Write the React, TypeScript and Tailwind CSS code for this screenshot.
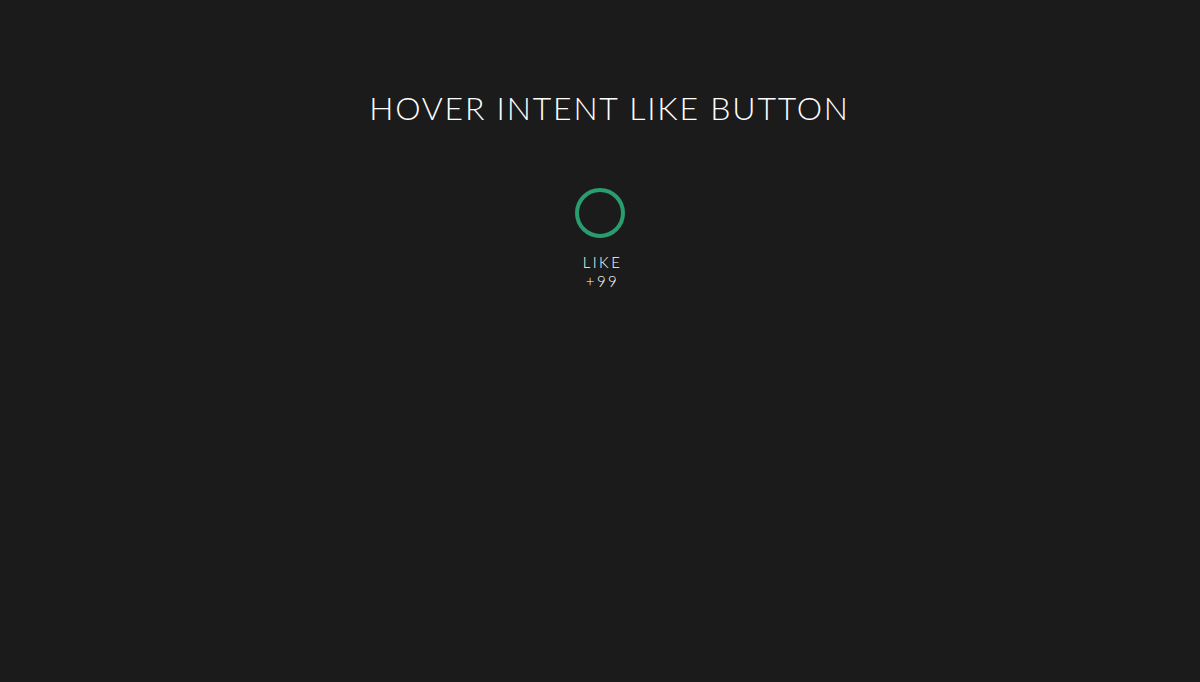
import React from "react";

export default function App() {
  return (
    <div className="min-h-[682px] w-full bg-[#1b1b1b] flex flex-col items-center" style={{ fontFamily: "Lato, 'Open Sans', sans-serif" }}>
      <h1 className="mt-[92px] pl-[19px] text-[32px] font-light text-white tracking-[1.8px] leading-[32px]">HOVER INTENT LIKE BUTTON</h1>
      <div className="mt-[64px] flex flex-col items-center">
        <div className="w-[50px] h-[50px] rounded-full border-[4px] border-[#2a9d6f]"></div>
        <div className="mt-[15px] pl-[5px] text-[15px] leading-[19px] text-white tracking-[2.5px] text-center font-light">
          <div>LIKE</div>
          <div>+99</div>
        </div>
      </div>
    </div>
  );
}
